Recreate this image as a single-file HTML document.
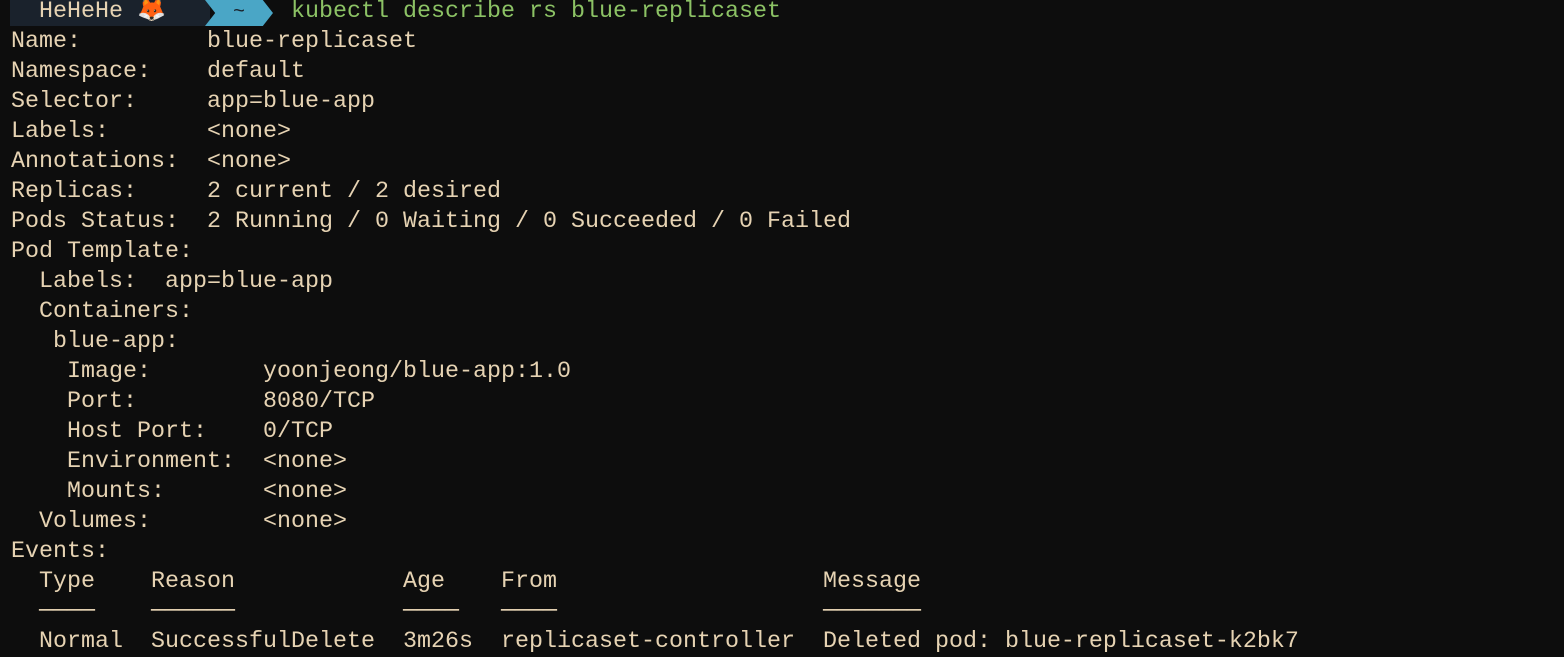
<!DOCTYPE html>
<html><head><style>
html,body{margin:0;background:#0d0d0d;width:1564px;height:656px;overflow:hidden}
pre{margin:0;position:absolute;left:11px;top:-3px;font-family:"Liberation Mono",monospace;font-size:23.33px;line-height:30px;color:#e6d3b3;white-space:pre}
.band{position:absolute;left:10px;top:0;width:200px;height:26px;background:#1a222c}
.arrow{position:absolute;left:205px;top:0;width:68px;height:26px;background:#4aa6c6;clip-path:polygon(0 0,85% 0,100% 50%,85% 100%,0 100%,15% 50%)}
.g{color:#8cc265}
.p{position:absolute;top:-3px;font-family:"Liberation Mono",monospace;font-size:23.33px;line-height:30px;white-space:pre}
</style></head><body>
<div class="band"></div><div class="arrow"></div>
<div style="position:absolute;left:233px;top:1px;font-family:'Liberation Mono',monospace;font-size:20px;color:#1a222c">~</div>
<div class="p" style="left:39px;color:#e6d3b3">HeHeHe 🦊</div>
<div class="p g" style="left:291px">kubectl describe rs blue-replicaset</div>
<pre> 
Name:         blue-replicaset
Namespace:    default
Selector:     app=blue-app
Labels:       &lt;none&gt;
Annotations:  &lt;none&gt;
Replicas:     2 current / 2 desired
Pods Status:  2 Running / 0 Waiting / 0 Succeeded / 0 Failed
Pod Template:
  Labels:  app=blue-app
  Containers:
   blue-app:
    Image:        yoonjeong/blue-app:1.0
    Port:         8080/TCP
    Host Port:    0/TCP
    Environment:  &lt;none&gt;
    Mounts:       &lt;none&gt;
  Volumes:        &lt;none&gt;
Events:
  Type    Reason            Age    From                   Message
  ────    ──────            ────   ────                   ───────
  Normal  SuccessfulDelete  3m26s  replicaset-controller  Deleted pod: blue-replicaset-k2bk7</pre>
</body></html>
